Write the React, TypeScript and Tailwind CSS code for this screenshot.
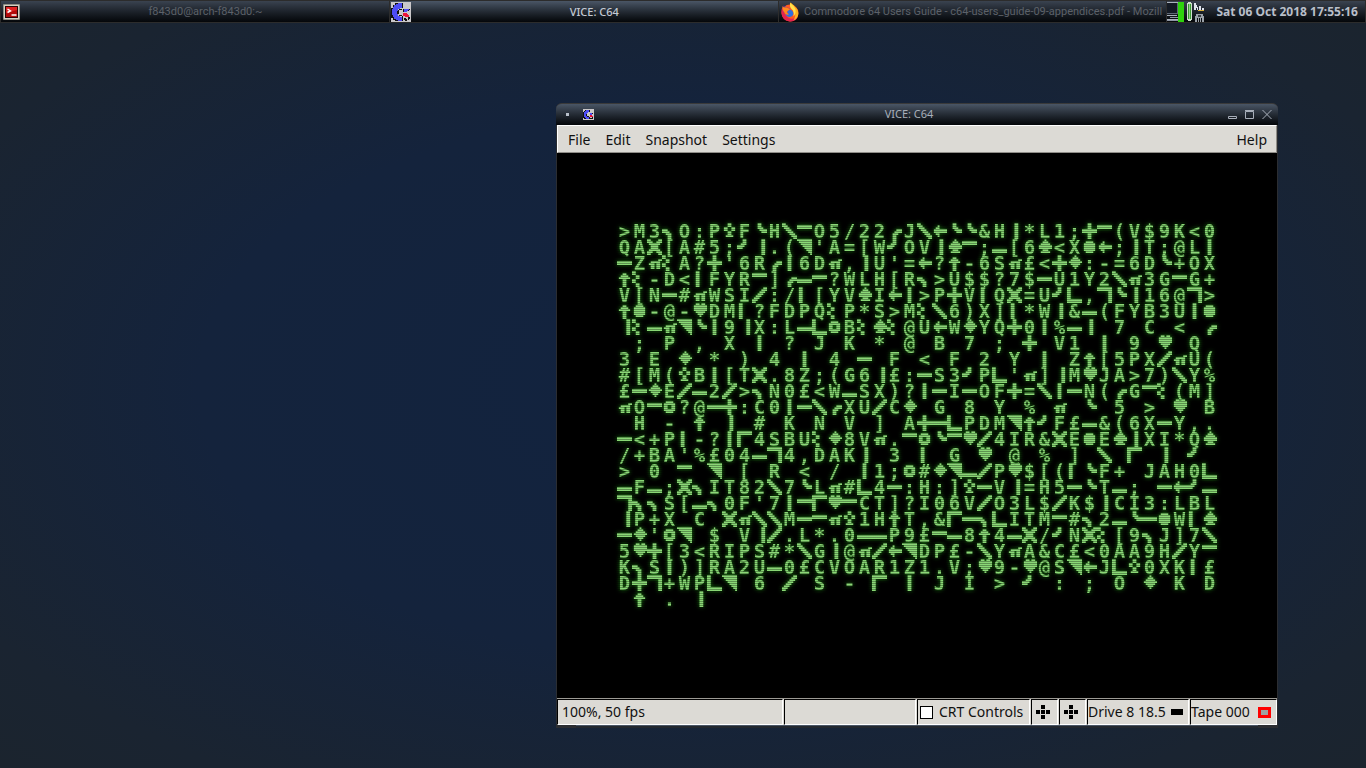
import type { ReactNode } from 'react'

// Lowercase letters, arrows and { } ~ ` stand for the graphics characters, the rest is plain text
const SCREEN = [
  ">M3iO:PxFjHmeO5/22uJm←jj&Hh*L1;{e(V$9K<0",
  "QAv[A#5;ky.(`'A=[WkOVhae;r[6a<Xq←;hT;@Lb",
  "cZ~}A?{'6Rub6D~,hU'=←?↑-6S~£<{z:-=6Dj+OX",
  "↑}-D<gFYRe]ufd?WLH[Ri>U$$?7$cU1Y2m~3GdG+",
  "V[Nc#~WSIn:/t[YVaI←b>P{VgQv=Ukl,pjh16@p>",
  "↑q-@-sDMt?FDPQ}P*S>M}m6)X]g*Wh&f(FYB3Ubq",
  "y}f~`jb9yX:LflwB}a}@U←WzYQ{0b%fh 7 C < u",
  " ; P , X b ? J K * @ B 7 ; { V1 b 9 s Q ",
  "3 E z * ) 4 b 4 c F < F 2 Y b Z↑[5PXn~U(",
  "#[M(xBb[Tv.8Z;(G6y£:cS3kPl'~]yMsJA>7)mY%",
  "£czEnf2n>iN0£<WrSX)?bcIcOF{=mbcN(uGe}(M]",
  "~Odw?@c{:C0bcmuXUnCz G 8 Y % ~ j 5 > s B",
  " H - ↑ h # K N V ] A{clPDM`↑kF£f&(6XcY,.",
  "c<+Pg-?bo4SBU}z8V~.ewjesn4IR&vEqEahXI*Qa",
  "/+BA'%£04fp4,DAKh 3 g G s @ % ] m o h k ",
  "> 0 e ` [ R < / b1;w#z`rnPs$[(tjF+ JAH0l",
  "fFr;viIT82m7jL~#l4c:H:]xcVy=H5cjTr; c←kr",
  "piiS[ri0F'7bdosdCT]?I06VnO3L$nK$hCI3:LBL",
  "yP+X C v~mmMcd~x1H↑T,&ocilITMd#i2rjcqWta",
  "cz'w` $ Vyn.L*.0ffP9£df8↑4fv/kNv}[9iJ]7m",
  "5s{[3<RIPS#*mGh@~n←`DP£-mY~A&C£<0AA9HnYe",
  "KiSb)]RA2Uf0£CVOAR1Z1.V;s9-s@S`←Jlx0XKg£",
  "D{p+WPl` 6 n S - o b J I > k : ; O z K D",
  " ↑ . h                                  ",
]

// 8x8 bitmaps, one byte per row
const GRAPHICS: Record<string, number[]> = {
  a: [0x08, 0x1c, 0x3e, 0x7f, 0x7f, 0x1c, 0x3e, 0x00],
  b: [0x18, 0x18, 0x18, 0x18, 0x18, 0x18, 0x18, 0x18],
  c: [0x00, 0x00, 0x00, 0xff, 0xff, 0x00, 0x00, 0x00],
  d: [0x00, 0x00, 0xff, 0xff, 0x00, 0x00, 0x00, 0x00],
  e: [0x00, 0xff, 0xff, 0x00, 0x00, 0x00, 0x00, 0x00],
  f: [0x00, 0x00, 0x00, 0x00, 0xff, 0xff, 0x00, 0x00],
  g: [0x30, 0x30, 0x30, 0x30, 0x30, 0x30, 0x30, 0x30],
  h: [0x0c, 0x0c, 0x0c, 0x0c, 0x0c, 0x0c, 0x0c, 0x0c],
  i: [0x00, 0x00, 0x00, 0xe0, 0xf0, 0x38, 0x18, 0x18],
  j: [0x18, 0x18, 0x1c, 0x0f, 0x07, 0x00, 0x00, 0x00],
  k: [0x18, 0x18, 0x38, 0xf0, 0xe0, 0x00, 0x00, 0x00],
  l: [0xc0, 0xc0, 0xc0, 0xc0, 0xc0, 0xc0, 0xff, 0xff],
  m: [0xc0, 0xe0, 0x70, 0x38, 0x1c, 0x0e, 0x07, 0x03],
  n: [0x03, 0x07, 0x0e, 0x1c, 0x38, 0x70, 0xe0, 0xc0],
  o: [0xff, 0xff, 0xc0, 0xc0, 0xc0, 0xc0, 0xc0, 0xc0],
  p: [0xff, 0xff, 0x03, 0x03, 0x03, 0x03, 0x03, 0x03],
  q: [0x00, 0x3c, 0x7e, 0x7e, 0x7e, 0x7e, 0x3c, 0x00],
  r: [0x00, 0x00, 0x00, 0x00, 0x00, 0xff, 0xff, 0x00],
  s: [0x36, 0x7f, 0x7f, 0x7f, 0x3e, 0x1c, 0x08, 0x00],
  t: [0x60, 0x60, 0x60, 0x60, 0x60, 0x60, 0x60, 0x60],
  u: [0x00, 0x00, 0x00, 0x07, 0x0f, 0x1c, 0x18, 0x18],
  v: [0xc3, 0xe7, 0x7e, 0x3c, 0x3c, 0x7e, 0xe7, 0xc3],
  w: [0x00, 0x3c, 0x7e, 0x66, 0x66, 0x7e, 0x3c, 0x00],
  x: [0x18, 0x18, 0x66, 0x66, 0x18, 0x18, 0x3c, 0x00],
  y: [0x06, 0x06, 0x06, 0x06, 0x06, 0x06, 0x06, 0x06],
  z: [0x08, 0x1c, 0x3e, 0x7f, 0x3e, 0x1c, 0x08, 0x00],
  '{': [0x18, 0x18, 0x18, 0xff, 0xff, 0x18, 0x18, 0x18],
  '}': [0xc0, 0xc0, 0x30, 0x30, 0xc0, 0xc0, 0x30, 0x30],
  '~': [0x00, 0x00, 0x03, 0x3e, 0x76, 0x36, 0x36, 0x00],
  '`': [0xff, 0x7f, 0x3f, 0x1f, 0x0f, 0x07, 0x03, 0x01],
  '↑': [0x00, 0x18, 0x3c, 0x7e, 0x18, 0x18, 0x18, 0x18],
  '←': [0x00, 0x10, 0x30, 0x7f, 0x7f, 0x30, 0x10, 0x00],
}

function bitmapPath(rows: number[]) {
  let d = ''
  rows.forEach((bits, y) => {
    for (let x = 0; x < 8; x++) {
      if (bits & (0x80 >> x)) d += `M${x} ${y}h1v1h-1z`
    }
  })
  return d
}

function Cell({ ch }: { ch: string }) {
  const rows = GRAPHICS[ch]
  if (rows) {
    return (
      <svg viewBox="0 0 8 8" preserveAspectRatio="none" className="w-full h-4 overflow-visible" fill="currentColor" aria-hidden="true">
        <path d={bitmapPath(rows)} />
      </svg>
    )
  }
  return <span className="text-center">{ch}</span>
}

function C64Screen() {
  return (
    <div className="relative bg-black px-[60px] pt-[70px] pb-[91px]">
      <div className="text-[#8ad876] font-['DejaVu_Sans_Mono',monospace] text-[19px] leading-4 font-bold [filter:drop-shadow(0_0_2px_#1f8a14)]">
        {SCREEN.map((line, i) => (
          <div key={i} className="grid grid-cols-[repeat(40,minmax(0,1fr))] h-4">
            {[...line].map((ch, j) => <Cell key={j} ch={ch} />)}
          </div>
        ))}
      </div>
      {/* Scanlines */}
      <div className="absolute inset-0 pointer-events-none bg-[repeating-linear-gradient(to_bottom,rgba(0,0,0,0.32)_0px,rgba(0,0,0,0.32)_1px,transparent_1px,transparent_2px)]" />
    </div>
  )
}

function CommodoreIcon({ className }: { className: string }) {
  return (
    <svg viewBox="0 0 20 20" className={className} shapeRendering="crispEdges" aria-hidden="true">
      <path fill="#c9c7c9" d="M0 0h20v20H0z" />
      <path fill="#111" d="M0 6h2V3h2V1h3v18H4v-1H2v-2H0zM11 1h1v5h-1zM8 7h3v1H8zM7 8h1v4H7zM8 13h3v1H8zM11 14h1v5h-1z" />
      <path fill="#4d4df5" d="M7 1h4v5H9v1H7v2H6v3h1v2h2v1h2v4H7v-1H5v-1H3v-2H2v-2H1V7h1V5h1V3h2V2h2z" />
      <path fill="#4d4df5" d="M13 7h5v1h-1v1h-1v1h-3z" />
      <path fill="#111" d="M12 7h1v3h-1zM18 7h1v1h-1zM17 8h1v1h-1zM13 16h2v1h1v2h-2v-1h-1zM17 15h2v2h-1v1h-1z" />
      <path fill="#ec1438" d="M12 11h4v1h1v1h1v2h-4v-1h-2z" />
    </svg>
  )
}

function TerminalIcon() {
  return (
    <svg viewBox="0 0 20 18" className="w-5 h-[18px] shrink-0" aria-hidden="true">
      <rect x="1" y="1" width="17" height="16" rx="1" fill="#8f8f84" />
      <rect x="2" y="2" width="15" height="14" fill="#d3d0c4" />
      <rect x="3" y="3" width="13" height="12" fill="#2a0505" />
      <rect x="4" y="4" width="11" height="10" fill="#b30a0a" />
      <path fill="#e02020" d="M4 4h11v3L4 10z" />
      <path stroke="#fff" strokeWidth="1.4" fill="none" d="M5.500 6l3 2-3 1.500M9.500 12h5" />
    </svg>
  )
}

function FirefoxIcon() {
  return (
    <svg viewBox="0 0 20 20" className="w-5 h-5 shrink-0" aria-hidden="true">
      <circle cx="10" cy="11" r="8.500" fill="#ff5a1f" />
      <path fill="#e3244f" d="M1.500 8C1 13 3 19 10 19.500c4 0 7-2 8-5-3 2.500-7 3-10 1S3.500 10 4 5.500C2.500 5 2 6 1.500 8z" />
      <path fill="#ffb320" d="M10 .5c2 1 4 2.500 5 4.500 2 1 3.500 4 3.300 7-.3 3-2 5.500-5 6.500 2.500-3 2.500-7 .5-10C12 6 9.500 4 10 .5z" />
      <path fill="#ffe14d" d="M10.500 1c1.500 2 4.500 3.500 5 7 .4 3-.5 5-2 6.500C14 11 13.500 8.500 11.500 7 10 5.500 9.500 3 10.500 1z" />
      <path fill="#2f6fe0" d="M9 7.500c2.500 0 4.300 1.700 4.300 4S11.500 15 9.500 15 5.500 13.500 5.500 11.500c1 1 2.500 1 3.500.3-1.500-.3-2-1.500-1.500-2.800z" />
      <path fill="#6030b0" d="M3 3.500c1 0 3 .8 4 2 1.500 0 2.500.5 3 1.500-.5 1-2 1.300-2.500 2L6 11l-3-1z" opacity=".55" />
      <path fill="#ff8a1c" d="M2.500 4c.8 1.200 1.500 1.500 2.500 1.500 2 0 3.500.5 5 2-1 1-2.500 1-3 2.300-.5 1.200.5 2.200 2 2.700-2 .8-4-.3-4.500-2-1.500-1-2.500-4-2-6.500z" />
    </svg>
  )
}

function TrayIcons() {
  return (
    <svg viewBox="0 0 42 20" className="w-[42px] h-5 shrink-0" shapeRendering="crispEdges" aria-hidden="true">
      <path fill="#aab2bd" d="M0 0h11v1H0zM0 13h10v1H0zM0 17h11v1H0z" />
      <path fill="#141a24" d="M0 1h10v11H0z" />
      <path fill="#5d6675" d="M10 1h1v11h-1zM0 11h11v1H0z" />
      <path fill="#8d96a4" d="M3 15h8v1H3zM0 18h11v1H0z" />
      <path fill="#2ed30d" d="M11 0h6v20h-6z" />
      <path fill="#cfe0cf" d="M21 0h3v1h1v17h-1v1h-3v-1h-1V1h1z" />
      <path fill="#3c9a34" d="M21 2h3v15h-3z" />
      <path fill="#8fd486" d="M22 2h1v15h-1z" />
      <path fill="#dfe4ec" d="M27 1h2v7h-2zM29 3h1v3h-1zM30 5h1v3h-1zM32 4h2v4h-2zM35 6h2v2h-2z" />
      <path fill="#d9b23a" d="M31 8h6v1h-6z" />
      <path fill="#9aa1a8" d="M29 12h7v2h1v6h-2v-4h-1v4h-1v-4h-1v4h-1v-4h-1v4h-2v-6h1z" />
      <path fill="#3a3f46" d="M31 13h3v2h-3z" />
    </svg>
  )
}

function Task({ icon, active, children }: { icon: ReactNode; active?: boolean; children: ReactNode }) {
  return (
    <button className={`flex flex-1 min-w-0 items-center h-full pl-px pr-1 border-r border-[#2c2c2c] text-[11px] ${active ? "text-[#c3c9d3] font-medium bg-linear-to-b from-[#4a5666] to-[#05070a]" : "font-['Roboto',sans-serif] text-[#5c6169]"}`}>
      {icon}
      <span className="flex-1 min-w-0 pt-px ml-1 overflow-hidden whitespace-nowrap">{children}</span>
    </button>
  )
}

function Panel() {
  return (
    <header className="flex items-center h-[23px] border border-[#2c2c2c] bg-linear-to-b from-[#3a4350] to-[#05070a]">
      <Task icon={<TerminalIcon />}>f843d0@arch-f843d0:~</Task>
      <Task icon={<CommodoreIcon className="w-5 h-5 shrink-0" />} active>VICE: C64</Task>
      <Task icon={<FirefoxIcon />}>Commodore 64 Users Guide - c64-users_guide-09-appendices.pdf - Mozill</Task>
      <TrayIcons />
      <time className="px-[7px] pt-px text-xs font-bold text-[#b9bfc9] whitespace-nowrap">Sat 06 Oct 2018 17:55:16</time>
    </header>
  )
}

function TitleBar() {
  return (
    <div className="flex items-center h-[22px] pl-[9px] pr-[6px] rounded-t-md border-t border-[#3a3a3a] bg-linear-to-b from-[#4a5666] to-[#05070a] text-[#a8afba]">
      <span className="w-[3px] h-[3px] mx-px bg-[#b9c0ca]" />
      <CommodoreIcon className="w-[11px] h-[11px] ml-[13px]" />
      <h1 className="flex-1 pr-1 text-center text-[11px]">VICE: C64</h1>
      <div className="flex items-center gap-[7px]">
        <button aria-label="Minimize">
          <svg viewBox="0 0 10 10" className="w-[10px] h-[10px]" fill="none" stroke="currentColor"><path d="M.5 6.500h8v2h-8z" /></svg>
        </button>
        <button aria-label="Maximize">
          <svg viewBox="0 0 10 10" className="w-[10px] h-[10px]" fill="none" stroke="currentColor"><path d="M.5 1.500h8v7h-8zM0 .5h9" /></svg>
        </button>
        <button aria-label="Close">
          <svg viewBox="0 0 10 10" className="w-[10px] h-[10px]" fill="none" stroke="currentColor"><path d="M.5 0l9 9M9.500 0l-9 9" /></svg>
        </button>
      </div>
    </div>
  )
}

function StatusCell({ className, children }: { className: string; children?: ReactNode }) {
  return (
    <div className={`flex items-center h-[26px] border border-t-black border-l-black border-r-white border-b-white whitespace-nowrap ${className}`}>
      {children}
    </div>
  )
}

function Joystick() {
  return (
    <svg viewBox="0 0 14 14" className="w-[14px] h-[14px]" shapeRendering="crispEdges" aria-hidden="true">
      <path d="M5 0h4v4H5zM0 5h4v4H0zM5 5h4v4H5zM10 5h4v4h-4zM5 10h4v4H5z" />
    </svg>
  )
}

function StatusBar() {
  return (
    <footer className="flex gap-px h-[27px] border-t border-[#9c9a94] bg-[#dcdad5]">
      <StatusCell className="flex-1 pl-1">100%, 50 fps</StatusCell>
      <StatusCell className="w-[132px]" />
      <StatusCell className="w-[113px] pl-[2px]">
        <label className="flex items-center gap-[6px]">
          <input type="checkbox" className="appearance-none w-[13px] h-[13px] border border-black bg-white" />
          CRT Controls
        </label>
      </StatusCell>
      <StatusCell className="w-[27px] pl-1"><Joystick /></StatusCell>
      <StatusCell className="w-[27px] pl-1"><Joystick /></StatusCell>
      <StatusCell className="w-[102px] pr-[5px]">
        Drive 8 18.5<span className="w-3 h-[6px] ml-auto bg-black" />
      </StatusCell>
      <StatusCell className="w-[87px] pr-[5px]">
        Tape 000<span className="w-[13px] h-[11px] ml-auto border-[3px] border-[#f00] bg-[#a0a0a0]" />
      </StatusCell>
    </footer>
  )
}

function ViceWindow() {
  return (
    <main className="absolute left-[556px] top-[103px] w-[722px] rounded-t-md bg-[#2b2d31]">
      <TitleBar />
      <div className="px-px text-sm text-[#111]">
        <nav className="flex gap-px h-7 px-[3px] pt-px border border-t-white border-l-white border-r-[#8f8d88] border-b-[#8f8d88] bg-[#dcdad5]">
          <button className="px-[7px]">File</button>
          <button className="px-[7px]">Edit</button>
          <button className="px-[7px]">Snapshot</button>
          <button className="px-[7px]">Settings</button>
          <button className="px-[6px] ml-auto">Help</button>
        </nav>
        <C64Screen />
        <StatusBar />
      </div>
      <div className="h-[3px] mx-5 border-t border-[#4a5666] bg-[#23282f]" />
    </main>
  )
}

export default function App() {
  return (
    <div className="relative min-h-screen overflow-hidden font-['Noto_Sans',sans-serif] bg-[radial-gradient(ellipse_at_center,#12233f_0%,#14233c_50%,#1a2431_85%,#1b242e_100%)]">
      <Panel />
      <ViceWindow />
    </div>
  )
}
